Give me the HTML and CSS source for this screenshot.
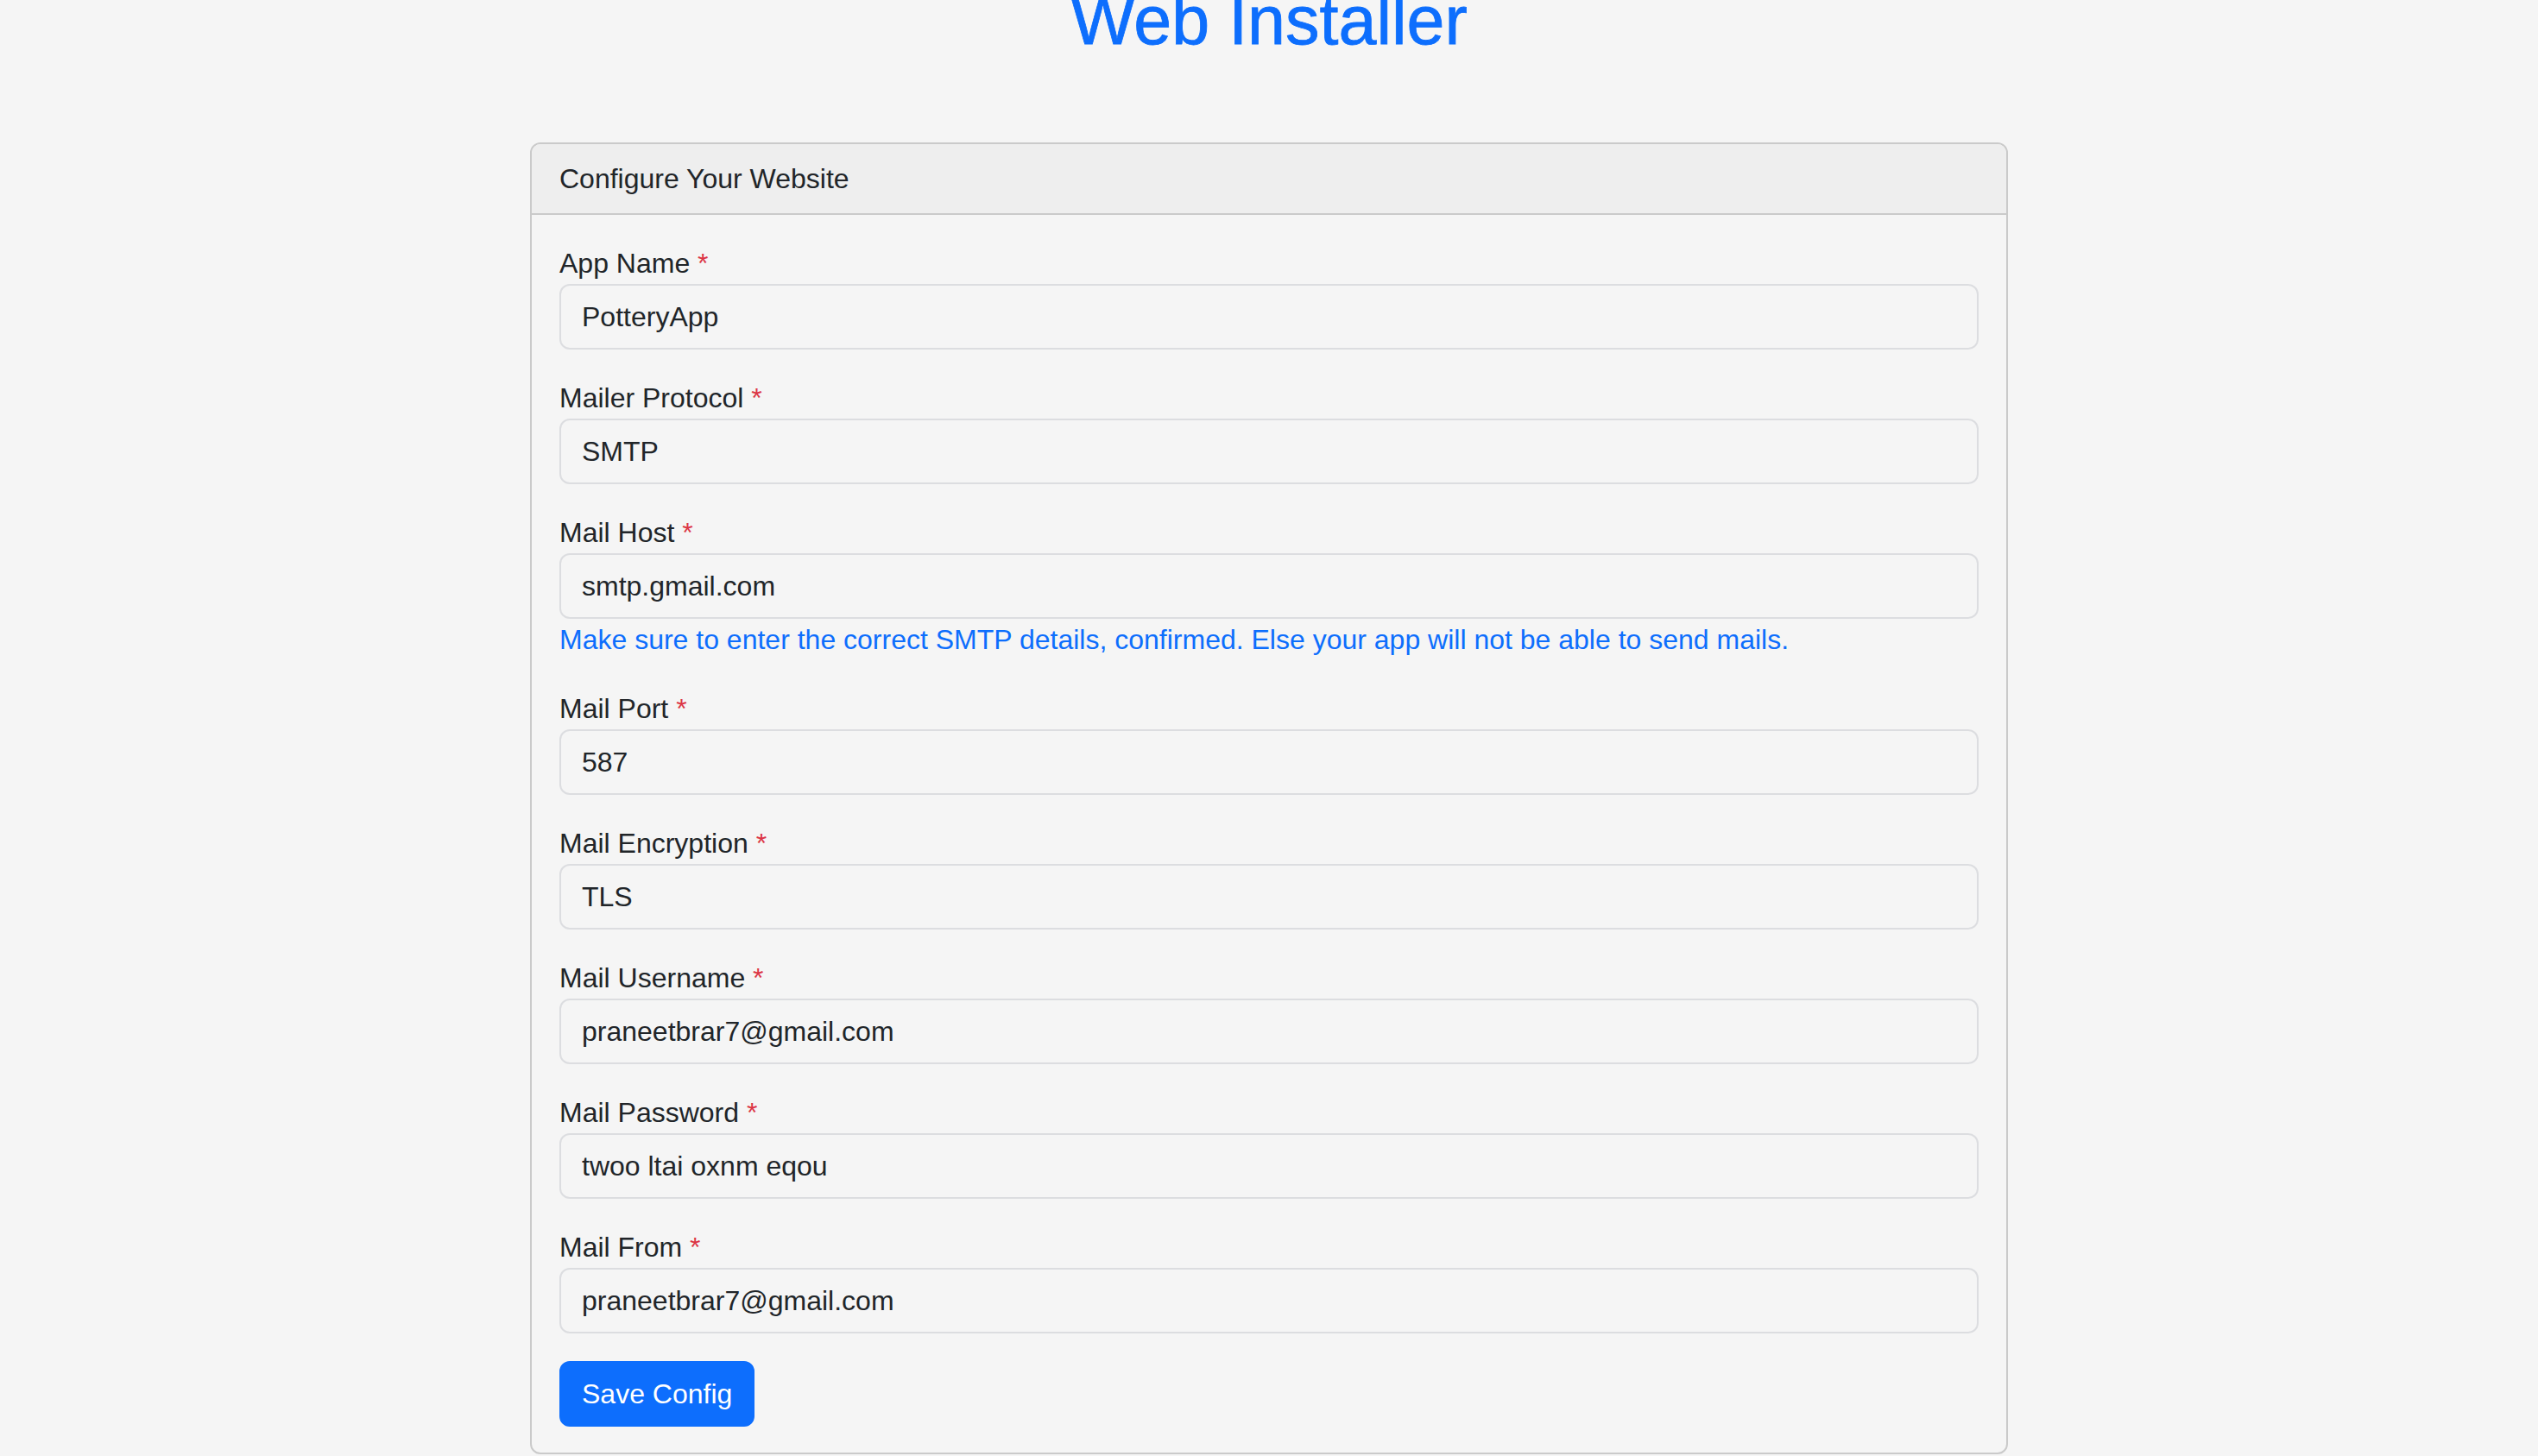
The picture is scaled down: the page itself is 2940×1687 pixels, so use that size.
FILE: index.html
```html
<!DOCTYPE html>
<html lang="en">
<head>
<meta charset="utf-8">
<title>Web Installer</title>
<link rel="stylesheet" href="styles.css">
</head>
<body>
<div class="container">
  <h1 class="title">Web Installer</h1>
  <div class="card">
    <div class="card-header">Configure Your Website</div>
    <form class="card-body">
      <div class="group">
        <label class="label">App Name <span class="req">*</span></label>
        <input class="input" type="text" value="PotteryApp">
      </div>
      <div class="group">
        <label class="label">Mailer Protocol <span class="req">*</span></label>
        <input class="input" type="text" value="SMTP">
      </div>
      <div class="group">
        <label class="label">Mail Host <span class="req">*</span></label>
        <input class="input" type="text" value="smtp.gmail.com">
        <div class="hint">Make sure to enter the correct SMTP details, confirmed. Else your app will not be able to send mails.</div>
      </div>
      <div class="group">
        <label class="label">Mail Port <span class="req">*</span></label>
        <input class="input" type="text" value="587">
      </div>
      <div class="group">
        <label class="label">Mail Encryption <span class="req">*</span></label>
        <input class="input" type="text" value="TLS">
      </div>
      <div class="group">
        <label class="label">Mail Username <span class="req">*</span></label>
        <input class="input" type="text" value="praneetbrar7@gmail.com">
      </div>
      <div class="group">
        <label class="label">Mail Password <span class="req">*</span></label>
        <input class="input" type="text" value="twoo ltai oxnm eqou">
      </div>
      <div class="group">
        <label class="label">Mail From <span class="req">*</span></label>
        <input class="input" type="text" value="praneetbrar7@gmail.com">
      </div>
      <button class="btn" type="button">Save Config</button>
    </form>
  </div>
</div>
</body>
</html>
```
FILE: styles.css
```css
* { box-sizing: border-box; }
html, body {
  margin: 0;
  padding: 0;
  background: #f5f5f5;
  color: #212529;
  font-family: "Liberation Sans", Arial, sans-serif;
  font-size: 32px;
  line-height: 48px;
}
.container {
  width: 1712px;
  margin: 0 auto;
}
.title {
  margin: -24px 0 93px;
  text-align: center;
  font-size: 79px;
  line-height: 96px;
  font-weight: 500;
  color: #0d6efd;
  -webkit-text-stroke: 0.8px #0d6efd;
}
.card {
  border: 2px solid #cacaca;
  border-radius: 12px;
  overflow: hidden;
}
.card-header {
  padding: 16px 32px;
  background: #eeeeee;
  border-bottom: 2px solid #cacaca;
  line-height: 48px;
}
.card-body {
  display: flex;
  flex-direction: column;
  align-items: flex-start;
  padding: 32px 32px 30px;
  margin: 0;
}
.group {
  display: flex;
  flex-direction: column;
  width: 100%;
  margin-bottom: 32px;
}
.label {
  display: block;
  line-height: 48px;
}
.req { color: #dc3545; }
.input {
  display: block;
  width: 100%;
  height: 76px;
  padding: 12px 24px;
  font-family: inherit;
  font-size: 32px;
  line-height: 48px;
  color: #212529;
  background: #f5f5f5;
  border: 2px solid #dcdde0;
  border-radius: 12px;
  outline: none;
}
.hint {
  color: #0d6efd;
  line-height: 48px;
}
.btn {
  display: inline-block;
  padding: 12px 24px;
  font-family: inherit;
  font-size: 32px;
  line-height: 48px;
  color: #ffffff;
  background: #0d6efd;
  border: 2px solid #0d6efd;
  border-radius: 12px;
  cursor: pointer;
}
```
